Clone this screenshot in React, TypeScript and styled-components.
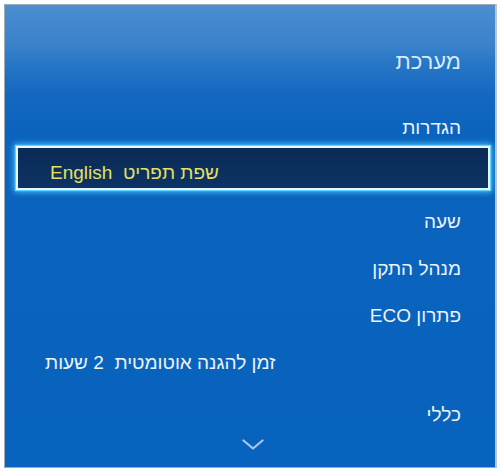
import styled, { createGlobalStyle } from 'styled-components';

const GlobalStyle = createGlobalStyle`
  html, body {
    margin: 0;
    padding: 0;
    background: #ffffff;
  }
  body {
    font-family: "Liberation Sans", Arial, "DejaVu Sans", sans-serif;
  }
`;

const Panel = styled.div`
  box-sizing: border-box;
  width: 493px;
  height: 464px;
  margin: 4px 0 0 4px;
  border: 1px solid #9ea9b6;
  border-right: 2px solid #b9c6d4;
  background: linear-gradient(
    to bottom,
    #4b8ed1 0px,
    #3a82cb 40px,
    #2574c6 62px,
    #1467c0 90px,
    #0b63bd 130px,
    #0863be 100%
  );
  display: flex;
  flex-direction: column;
  overflow: hidden;
`;

const Header = styled.div`
  box-sizing: border-box;
  height: 99px;
  display: flex;
  justify-content: flex-end;
  align-items: center;
  padding: 14px 34px 0 0;
`;

const Title = styled.div`
  direction: rtl;
  font-size: 22px;
  color: #d6ecfa;
`;

const Menu = styled.div`
  display: flex;
  flex-direction: column;
`;

const Row = styled.div<{ $align?: 'left' | 'right'; $height?: number; $top?: number }>`
  box-sizing: border-box;
  height: ${(p) => p.$height ?? 47}px;
  display: flex;
  align-items: center;
  justify-content: ${(p) => (p.$align === 'left' ? 'flex-start' : 'flex-end')};
  padding: ${(p) => p.$top ?? 0}px 34px 0 40px;
  font-size: 19px;
  color: #eef4fb;
`;

const Label = styled.span`
  direction: rtl;
  white-space: pre;
`;

const Selected = styled.div`
  box-sizing: border-box;
  height: 44px;
  margin: 0 5px 8px 11px;
  padding: 10px 0 0 32px;
  display: flex;
  align-items: center;
  border: 2px solid #e4f7ff;
  background: linear-gradient(to bottom, #0b2a55 0%, #0c3365 100%);
  box-shadow: 0 0 6px 2px #43c6ff, 0 0 1px 1px #9fe6ff;
  font-size: 19px;
  color: #e4e060;
`;

const Footer = styled.div`
  flex: 1;
  display: flex;
  justify-content: center;
  padding: 2px 0 0 5px;
`;

const Chevron = () => (
  <svg width="22" height="11" viewBox="0 0 22 11">
    <path d="M1.5 1.5 L11 9.5 L20.5 1.5" fill="none" stroke="#a9c9ea" strokeWidth="2.2" strokeLinecap="round" strokeLinejoin="round" />
  </svg>
);

export default function App() {
  return (
    <>
      <GlobalStyle />
      <Panel>
        <Header>
          <Title>מערכת</Title>
        </Header>
        <Menu>
          <Row $height={42} $top={6}>
            <Label>הגדרות</Label>
          </Row>
          <Selected>
            <Label>{'שפת תפריט  English'}</Label>
          </Selected>
          <Row>
            <Label>שעה</Label>
          </Row>
          <Row>
            <Label>מנהל התקן</Label>
          </Row>
          <Row>
            <Label>פתרון ECO</Label>
          </Row>
          <Row $align="left">
            <Label>{'זמן להגנה אוטומטית  2 שעות'}</Label>
          </Row>
          <Row $height={51} $top={6}>
            <Label>כללי</Label>
          </Row>
        </Menu>
        <Footer>
          <Chevron />
        </Footer>
      </Panel>
    </>
  );
}
